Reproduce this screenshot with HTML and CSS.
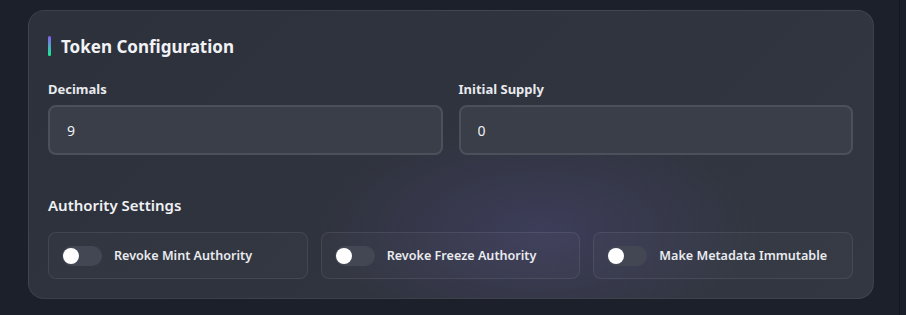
FILE: index.html
```html
<!DOCTYPE html>
<html lang="en">
<head>
    <meta charset="UTF-8">
    <meta name="viewport" content="width=device-width, initial-scale=1.0">
    <title>Token Configuration</title>
    <link rel="stylesheet" href="styles.css">
</head>
<body>

    <div class="page">
        <section class="card">
            <h2 class="card-title"><span class="accent"></span>Token Configuration</h2>

            <div class="field-row">
                <div class="field">
                    <label for="decimals">Decimals</label>
                    <input id="decimals" type="text" value="9">
                </div>
                <div class="field">
                    <label for="supply">Initial Supply</label>
                    <input id="supply" type="text" value="0">
                </div>
            </div>

            <h3 class="section-title">Authority Settings</h3>

            <div class="toggle-row">
                <div class="toggle-card">
                    <span class="switch"><span class="knob"></span></span>
                    <span class="toggle-label">Revoke Mint Authority</span>
                </div>
                <div class="toggle-card">
                    <span class="switch"><span class="knob"></span></span>
                    <span class="toggle-label">Revoke Freeze Authority</span>
                </div>
                <div class="toggle-card">
                    <span class="switch"><span class="knob"></span></span>
                    <span class="toggle-label">Make Metadata Immutable</span>
                </div>
            </div>
        </section>
    </div>

</body>
</html>
```

FILE: styles.css
```css
body {
    margin: 0;
    padding: 0;
    height: 315px;
    background-color: #1a1f2b;
    color: #eceef2;
    font-family: "Noto Sans", "Open Sans", sans-serif;
    overflow: hidden;
}

.page {
    width: 900px;
    height: 315px;
    padding: 10px 0 0 28px;
    box-sizing: border-box;
    border-right: 1px solid #12161d;
    background-color: #1b202b;
}

.card {
    width: 846px;
    height: 289px;
    box-sizing: border-box;
    padding: 24px 20px 0 19px;
    border: 1px solid rgba(255, 255, 255, 0.07);
    border-radius: 16px;
    background:
        radial-gradient(ellipse 220px 110px at 510px 220px, rgba(88, 80, 150, 0.3), transparent),
        linear-gradient(135deg, #2d313b 0%, #30343e 60%, #323741 100%);
}

.card-title {
    display: flex;
    align-items: center;
    margin: 0;
    height: 22px;
    font-size: 17px;
    font-weight: 700;
    color: #f1f2f5;
}

.accent {
    width: 3px;
    height: 20px;
    margin-right: 10px;
    border-radius: 2px;
    background: linear-gradient(180deg, #8b5cf6, #14f195);
}

.field-row {
    display: grid;
    grid-template-columns: 1fr 1fr;
    gap: 16px;
    margin-top: 23px;
}

.field label {
    display: block;
    font-size: 13px;
    font-weight: 700;
    color: #e8eaee;
    margin-bottom: 7px;
}

.field input {
    width: 100%;
    height: 50px;
    box-sizing: border-box;
    padding: 0 17px;
    border: 2px solid #4b505b;
    border-radius: 8px;
    background-color: #3a3e49;
    color: #eef0f3;
    font-family: "Noto Sans", "Open Sans", sans-serif;
    font-size: 14px;
    outline: none;
}

.section-title {
    margin: 40px 0 0 0;
    font-size: 15px;
    font-weight: 600;
    color: #f0f1f4;
}

.toggle-row {
    display: grid;
    grid-template-columns: 1fr 1fr 1fr;
    gap: 13px;
    margin-top: 17px;
}

.toggle-card {
    display: flex;
    align-items: center;
    height: 47px;
    box-sizing: border-box;
    padding: 0 13px;
    border: 1px solid rgba(255, 255, 255, 0.08);
    border-radius: 8px;
    background-color: rgba(255, 255, 255, 0.025);
}

.switch {
    position: relative;
    width: 40px;
    height: 20px;
    border-radius: 10px;
    background-color: #434754;
    margin-right: 12px;
    flex-shrink: 0;
}

.knob {
    position: absolute;
    top: 2px;
    left: 1px;
    width: 16px;
    height: 16px;
    border-radius: 50%;
    background-color: #ffffff;
}

.toggle-label {
    font-size: 12.6px;
    font-weight: 600;
    color: #e9ebef;
}
```
